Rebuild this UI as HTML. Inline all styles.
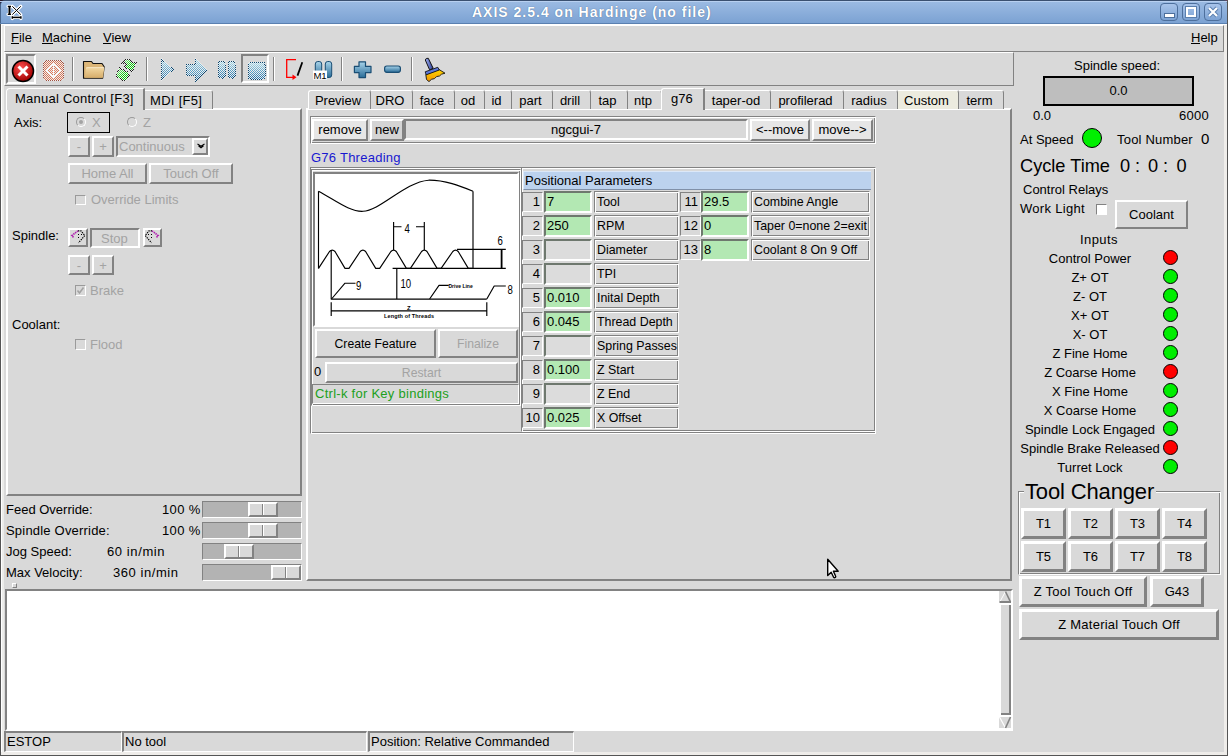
<!DOCTYPE html>
<html><head><meta charset="utf-8">
<style>
*{box-sizing:border-box}
html,body{margin:0;padding:0}
body{width:1228px;height:756px;position:relative;overflow:hidden;background:#d9d9d9;font-family:"Liberation Sans",sans-serif;font-size:13px;color:#000}
.a{position:absolute}
.t{position:absolute;line-height:15px;white-space:nowrap}
.dis{color:#a3a3a3}
.r{position:absolute;background:#d9d9d9;border:2px solid;border-color:#fff #828282 #828282 #fff}
.s{position:absolute;border:2px solid;border-color:#828282 #fff #fff #828282}
.r1{position:absolute;border:1px solid;border-color:#fff #828282 #828282 #fff}
.s1{position:absolute;border:1px solid;border-color:#828282 #fff #fff #828282}
.ctr{display:flex;align-items:center;justify-content:center;white-space:nowrap}
.tab{position:absolute;top:90px;height:19px;border-top:1px solid #fff;border-right:1px solid #828282;border-top-right-radius:3px;display:flex;justify-content:center;padding-right:3px;line-height:15px;padding-top:2px;white-space:nowrap}
u{text-decoration:none;background:linear-gradient(#000,#000) no-repeat 0 13px/100% 1px}
</style></head><body>
<!-- TITLE BAR -->
<div class="a" style="left:0;top:0;width:5px;height:5px;background:#2a1828"></div><div class="a" style="left:1223px;top:0;width:5px;height:5px;background:#6a4a68"></div><div class="a" style="left:0;top:0;width:1228px;height:24px;background:linear-gradient(#9cbbe3,#7aa1d2);border-top:1px solid #3a5070;border-left:1px solid #46648c;border-radius:5px 5px 0 0"></div>
<div class="a" style="left:0;top:1px;width:1228px;height:1px;background:#b8d0f0"></div>
<div class="a" style="left:0;top:23px;width:1228px;height:1px;background:#5a80b0"></div>
<div class="a" style="left:0;top:24px;width:1228px;height:1px;background:#fff"></div>
<div class="t" id="title" style="left:472px;top:4px;font-size:14px;line-height:16px;font-weight:bold;color:#fff;letter-spacing:1px;text-shadow:0 0 1px #3c5a80">AXIS 2.5.4 on Hardinge (no file)</div>

<!-- title icons -->
<svg class="a" style="left:0;top:0" width="30" height="24" viewBox="0 0 30 24">
<g stroke="#fff" stroke-width="3.2" fill="none" stroke-linecap="round">
<path d="M8 6.3h2.8M9.5 6.3v8M8 14.3h2.8M12.3 6.3l8.5 8.3M20.8 6.3l-8.5 8.3M12.3 17.4h8.6M12.3 16.3v2.3M20.9 16.3v2.3"/></g>
<g stroke="#000" fill="none">
<path d="M7.8 6.3h3.2M7.8 14.3h3.2" stroke-width="1.3"/><path d="M9.5 6v8.6" stroke-width="2"/>
<path d="M12.3 6.3l8.5 8.3M20.8 6.3l-8.5 8.3" stroke-width="1"/>
<path d="M12.3 17.4h8.6" stroke-width="1.5"/><path d="M12.3 16.2v2.5M20.9 16.2v2.5" stroke-width="1.4"/>
</g></svg>
<div class="a" style="left:1160px;top:3px;width:18px;height:18px;border:1px solid #4d6f9c;border-radius:4px;background:linear-gradient(#a8c4ea,#7ca2d3)"></div>
<div class="a" style="left:1164px;top:13px;width:11px;height:5px;background:#fff;border:1px solid #4d6f9c"></div>
<div class="a" style="left:1182px;top:3px;width:18px;height:18px;border:1px solid #4d6f9c;border-radius:4px;background:linear-gradient(#a8c4ea,#7ca2d3)"></div>
<div class="a" style="left:1186px;top:7px;width:10px;height:10px;border:2px solid #fff;outline:1px solid #5a7fae"></div>
<div class="a" style="left:1204px;top:3px;width:18px;height:18px;border:1px solid #4d6f9c;border-radius:4px;background:linear-gradient(#a8c4ea,#7ca2d3)"></div>
<svg class="a" style="left:1204px;top:3px" width="18" height="18"><path d="M5 5l8 8M13 5l-8 8" stroke="#5a7fae" stroke-width="4"/><path d="M5 5l8 8M13 5l-8 8" stroke="#fff" stroke-width="2.2"/></svg>
<!-- WINDOW FRAME -->
<div class="a" style="left:0;top:24px;width:1px;height:732px;background:#555"></div>
<div class="a" style="left:1px;top:25px;width:3px;height:730px;background:#ececea;border-left:1px solid #fff"></div>
<div class="a" style="left:1227px;top:0;width:1px;height:756px;background:#555"></div>
<div class="a" style="left:1224px;top:25px;width:3px;height:730px;background:#efedea"></div>
<div class="a" style="left:0;top:755px;width:1228px;height:1px;background:#555"></div>
<div class="a" style="left:1px;top:752px;width:1226px;height:3px;background:#efedea"></div>
<!-- MENUBAR -->
<div class="r1" style="left:4px;top:25px;width:1220px;height:27px;border-color:#fff #828282 #828282 #fff"></div>
<div class="t" style="left:11px;top:30px"><u>F</u>ile</div>
<div class="t" style="left:42px;top:30px"><u>M</u>achine</div>
<div class="t" style="left:103px;top:30px"><u>V</u>iew</div>
<div class="t" style="left:1191px;top:30px"><u>H</u>elp</div>
<!-- TOOLBAR -->
<div class="r1" style="left:4px;top:52px;width:1010px;height:34px;border-color:#fff #828282 #828282 #fff"></div>

<!-- TOOLBAR ICONS -->
<div class="s" style="left:6px;top:54px;width:30px;height:30px"></div>
<div class="s" style="left:241px;top:54px;width:28px;height:29px"></div>
<svg class="a" style="left:0;top:50px" width="460" height="36" viewBox="0 50 460 36">
<defs>
<pattern id="chk" x="0" y="0" width="2" height="2" patternUnits="userSpaceOnUse"><rect x="1" y="0" width="1" height="1" fill="#eeeeee"/><rect x="0" y="1" width="1" height="1" fill="#eeeeee"/></pattern>
<linearGradient id="gL" x1="0" y1="0" x2="0" y2="1"><stop offset="0" stop-color="#a8dcec"/><stop offset="1" stop-color="#1e6ea6"/></linearGradient>
<linearGradient id="gG" x1="0" y1="0" x2="1" y2="1"><stop offset="0" stop-color="#b0f0b0"/><stop offset="0.5" stop-color="#10d010"/><stop offset="1" stop-color="#00b000"/></linearGradient>
<linearGradient id="gR" x1="0" y1="0" x2="0" y2="1"><stop offset="0" stop-color="#d06040"/><stop offset="1" stop-color="#c05030"/></linearGradient>
<radialGradient id="gRed" cx="40%" cy="35%" r="65%"><stop offset="0" stop-color="#ff5050"/><stop offset="1" stop-color="#a00000"/></radialGradient>
<linearGradient id="gBlue" x1="0" y1="0" x2="0" y2="1"><stop offset="0" stop-color="#7ab4dc"/><stop offset="1" stop-color="#2a6a9c"/></linearGradient>
</defs>
<!-- estop sunken btn -->
<circle cx="23" cy="71" r="10.5" fill="url(#gRed)" stroke="#000" stroke-width="1.5"/>
<path d="M18.5 66.5l9 9M27.5 66.5l-9 9" stroke="#fff" stroke-width="3"/>
<!-- separators -->
<g stroke-width="1"><path d="M72.5 57v24M146.5 57v24M273.5 57v24M341.5 57v24M411.5 57v24" stroke="#828282"/><path d="M73.5 57v24M147.5 57v24M274.5 57v24M342.5 57v24M412.5 57v24" stroke="#fff"/></g>
<!-- folder -->
<linearGradient id="gF" x1="0" y1="0" x2="0" y2="1"><stop offset="0" stop-color="#f2d8a2"/><stop offset="1" stop-color="#d6ad6a"/></linearGradient>
<path d="M83.5 61.5h8l1.5 2h9l2.2 3.2-1.5 11.5h-19.2z" fill="#dcb678" stroke="#111" stroke-width="1.1" stroke-linejoin="round"/>
<path d="M87 67.5Q86 67.5 85.8 69L85 77.8H103L104.3 67.5z" fill="url(#gF)"/>
<path d="M86 68.2Q86.5 67.6 88 67.6H104" stroke="#fbeed0" stroke-width="0.8" fill="none"/>
<g shape-rendering="crispEdges">
<!-- reset -->
<rect x="43.5" y="60.5" width="20" height="20" rx="4" fill="#d87858" stroke="#a05040"/>
<path d="M53.5 63.5l7 7-7 7-7-7z" fill="none" stroke="#fff" stroke-width="1.6"/>
<path d="M53.5 66.5l4 4-4 4-4-4z" fill="#e08060"/>
<path d="M53.5 65v11" stroke="#fff" stroke-width="1"/>
<rect x="43.5" y="60.5" width="20" height="20" rx="4" fill="url(#chk)" stroke="url(#chk)"/>
<!-- reload -->
<path id="rl1" d="M121 64.5L126 59h3l3 3.5h4l-3.5 9-8.5-4.5 3-2-2-2.5z" fill="url(#gG)" stroke="#202020"/>
<path id="rl2" d="M116 78V75l3.5-7 8 4 2 4-4 4.5h-2.5l-5-3z" fill="url(#gG)" stroke="#202020"/>
<path d="M121 64.5L126 59h3l3 3.5h4l-3.5 9-8.5-4.5 3-2-2-2.5z" fill="url(#chk)" stroke="url(#chk)"/>
<path d="M116 78V75l3.5-7 8 4 2 4-4 4.5h-2.5l-5-3z" fill="url(#chk)" stroke="url(#chk)"/>
<!-- play -->
<path d="M161.5 59v21l11.5-10.5z" fill="url(#gL)" stroke="#0a4670"/>
<path d="M161.5 59v21l11.5-10.5z" fill="url(#chk)" stroke="url(#chk)"/>
<!-- step -->
<path d="M186.5 64.5h9v-6l11.5 11.5-11.5 11.5v-6.5h-9z" fill="url(#gL)" stroke="#0a4670"/>
<path d="M186.5 64.5h9v-6l11.5 11.5-11.5 11.5v-6.5h-9z" fill="url(#chk)" stroke="url(#chk)"/>
<!-- pause -->
<rect x="218.5" y="61.5" width="6.5" height="16.5" rx="2" fill="url(#gL)" stroke="#0a4670"/>
<rect x="228.5" y="61.5" width="6.5" height="16.5" rx="2" fill="url(#gL)" stroke="#0a4670"/>
<rect x="218.5" y="61.5" width="6.5" height="16.5" rx="2" fill="url(#chk)" stroke="url(#chk)"/>
<rect x="228.5" y="61.5" width="6.5" height="16.5" rx="2" fill="url(#chk)" stroke="url(#chk)"/>
<!-- stop square -->
<rect x="248.5" y="62.5" width="16.5" height="16.5" rx="2" fill="url(#gL)" stroke="#0a4670"/>
<rect x="248.5" y="62.5" width="16.5" height="16.5" rx="2" fill="url(#chk)" stroke="url(#chk)"/>
</g>
<!-- stop sunken btn -->
<!-- block delete -->
<path d="M296 59.7h-9.3v17.6h6.5" stroke="#f00" stroke-width="1.3" fill="none"/>
<path d="M292.5 74.6l4 2.7-4 2.7z" fill="#f00"/>
<path d="M302.3 62.3l-4.8 13.3" stroke="#000" stroke-width="1.8"/>
<!-- M1 -->
<linearGradient id="gB2" x1="0" y1="0" x2="0" y2="1"><stop offset="0" stop-color="#a8d4ea"/><stop offset="1" stop-color="#2a6c98"/></linearGradient>
<rect x="315.3" y="61.5" width="6.4" height="16" rx="2.5" fill="url(#gB2)" stroke="#1a4e74"/>
<rect x="325.3" y="61.5" width="6.4" height="16" rx="2.5" fill="url(#gB2)" stroke="#1a4e74"/>
<rect x="313" y="70.5" width="14" height="9" fill="#fff"/>
<text x="313.5" y="78.6" font-family="Liberation Sans" font-size="9.6" fill="#000" textLength="13">M1</text>
<!-- plus minus -->
<path d="M359 61.8h6.5v4.6h5.5v6.2h-5.5v5h-6.5v-5h-4.6v-6.2h4.6z" fill="url(#gB2)" stroke="#1a4e74" stroke-width="1.2" stroke-linejoin="round"/>
<rect x="384.6" y="66" width="15.8" height="6.3" rx="2.2" fill="url(#gB2)" stroke="#1a4e74" stroke-width="1.2"/>
<!-- broom -->
<linearGradient id="gH" x1="0" y1="0" x2="1" y2="0"><stop offset="0" stop-color="#a0b0f0"/><stop offset="1" stop-color="#2a3c98"/></linearGradient>
<linearGradient id="gY" x1="0" y1="0" x2="0" y2="1"><stop offset="0" stop-color="#ffd800"/><stop offset="1" stop-color="#f09000"/></linearGradient>
<path d="M425.3 60Q425.8 57.8 428.3 58.3L433.2 68.3L429.6 69.8Z" fill="url(#gH)" stroke="#111" stroke-width="1"/>
<path d="M426.5 79.5L425.8 74.5L439 69.5L445 73.2L441.5 74.2L439.5 76L436.5 76.6L434.5 78.6L431.5 79.3L429 81.6Z" fill="url(#gY)" stroke="#111" stroke-width="0.9" stroke-linejoin="round"/>
<path d="M425.2 71.8L437.8 67.3L439.3 70L426.2 74.8Z" fill="#5c78d8" stroke="#111" stroke-width="0.9"/>
</svg>

<!-- LEFT NOTEBOOK -->
<div class="a" style="left:6px;top:108px;width:296px;height:388px;border:1px solid;border-color:#fff #828282 #828282 #fff;border-width:2px 2px 2px 2px"></div>
<!-- tabs -->
<div class="a" style="left:6px;top:88px;width:139px;height:22px;background:#d9d9d9;border-top:1px solid #fff;border-left:1px solid #fff;border-right:2px solid #828282;border-top-left-radius:4px"></div>
<div class="t" style="left:15px;top:91px;letter-spacing:0.24px">Manual Control [F3]</div>
<div class="a" style="left:145px;top:90px;width:68px;height:19px;background:#d9d9d9;border-top:1px solid #fff;border-right:1px solid #828282;border-top-right-radius:3px"></div>
<div class="t" style="left:150px;top:93px;letter-spacing:0.3px">MDI [F5]</div>
<!-- left panel content -->
<div class="t" style="left:14px;top:115px">Axis:</div>
<div class="a" style="left:67px;top:112px;width:43px;height:21px;border:1px solid #000"></div>
<div class="a" style="left:76px;top:117px;width:10px;height:10px;border-radius:50%;border:1px solid;border-color:#9a9a9a #fff #fff #9a9a9a;background:#d9d9d9"></div>
<div class="a" style="left:79px;top:120px;width:4px;height:4px;border-radius:50%;background:#a3a3a3"></div>
<div class="t dis" style="left:92px;top:115px">X</div>
<div class="a" style="left:127px;top:117px;width:10px;height:10px;border-radius:50%;border:1px solid;border-color:#9a9a9a #fff #fff #9a9a9a;background:#d9d9d9"></div>
<div class="t dis" style="left:143px;top:115px">Z</div>
<div class="r ctr dis" style="left:68px;top:136px;width:22px;height:21px">-</div>
<div class="r ctr dis" style="left:92px;top:136px;width:22px;height:21px">+</div>
<div class="s" style="left:116px;top:136px;width:94px;height:21px"></div>
<div class="t dis" style="left:119px;top:139px">Continuous</div>
<div class="r" style="left:192px;top:138px;width:16px;height:17px"></div>
<svg class="a" style="left:197px;top:143px" width="8" height="6"><path d="M0.5 1l3.5 2.2 3.5-2.2M1.5 2.8l2.5 2 2.5-2" stroke="#000" fill="none" stroke-width="1.1"/></svg>
<div class="r ctr dis" style="left:68px;top:163px;width:79px;height:21px">Home All</div>
<div class="r ctr dis" style="left:149px;top:163px;width:84px;height:21px">Touch Off</div>
<div class="a" style="left:75px;top:195px;width:11px;height:10px;border:1px solid;border-color:#9a9a9a #fff #fff #9a9a9a"></div>
<div class="t dis" style="left:91px;top:192px">Override Limits</div>
<div class="t" style="left:12px;top:228px">Spindle:</div>
<div class="r" style="left:68px;top:228px;width:20px;height:19px"></div>
<svg class="a" style="left:68px;top:227px" width="20" height="20" viewBox="68 227 20 20"><g fill="none" stroke-width="1.2"><path d="M78 230.8H81L84.8 235.5L78.5 242.8" stroke="#000" stroke-dasharray="1.3 1"/><path d="M78 230.8L71.8 235.6L74 237.8" stroke="#b020b0" stroke-width="1.6" stroke-dasharray="1.5 0.7"/></g><path d="M78 234.5h1M78 237.5h1M81 234.5h1" stroke="#000"/></svg>
<div class="s" style="left:90px;top:228px;width:50px;height:20px;border-color:#828282 #fff #fff #828282"></div>
<div class="t dis" style="left:101px;top:231px">Stop</div>
<div class="r" style="left:143px;top:228px;width:19px;height:19px"></div>
<svg class="a" style="left:142px;top:227px" width="20" height="20" viewBox="142 227 20 20"><g fill="none" stroke-width="1.2"><path d="M152 230.8H149L145.2 235.5L151.5 242.8" stroke="#000" stroke-dasharray="1.3 1"/><path d="M152 230.8L158.2 235.6L156 237.8" stroke="#b020b0" stroke-width="1.6" stroke-dasharray="1.5 0.7"/></g><path d="M151 234.5h1M151 237.5h1M148 234.5h1" stroke="#000"/></svg>
<div class="r ctr dis" style="left:68px;top:255px;width:22px;height:20px">-</div>
<div class="r ctr dis" style="left:92px;top:255px;width:22px;height:20px">+</div>
<div class="a" style="left:75px;top:285px;width:11px;height:11px;border:1px solid;border-color:#9a9a9a #fff #fff #9a9a9a"></div>
<svg class="a" style="left:76px;top:286px" width="9" height="9"><path d="M1.5 4.5l2 2.5 4-5.5" stroke="#a3a3a3" stroke-width="1.6" fill="none"/></svg>
<div class="t dis" style="left:90px;top:283px">Brake</div>
<div class="t" style="left:12px;top:317px">Coolant:</div>
<div class="a" style="left:75px;top:339px;width:11px;height:11px;border:1px solid;border-color:#9a9a9a #fff #fff #9a9a9a"></div>
<div class="t dis" style="left:90px;top:337px">Flood</div>
<!-- sliders -->
<div class="t" style="left:6px;top:502px">Feed Override:</div>
<div class="t" style="left:162px;top:502px;letter-spacing:0.35px">100 %</div>
<div class="t" style="left:6px;top:523px;letter-spacing:0.2px">Spindle Override:</div>
<div class="t" style="left:162px;top:523px;letter-spacing:0.35px">100 %</div>
<div class="t" style="left:6px;top:544px">Jog Speed:</div>
<div class="t" style="left:107px;top:544px;letter-spacing:0.6px">60 in/min</div>
<div class="t" style="left:6px;top:565px">Max Velocity:</div>
<div class="t" style="left:113px;top:565px;letter-spacing:0.55px">360 in/min</div>
<div class="s1" style="left:202px;top:501px;width:100px;height:17px;background:#b3b3b3"></div>
<div class="r" style="left:248px;top:502px;width:30px;height:15px"></div><div class="a" style="left:262px;top:504px;width:1px;height:11px;background:#828282"></div><div class="a" style="left:263px;top:504px;width:1px;height:11px;background:#fff"></div>
<div class="s1" style="left:202px;top:522px;width:100px;height:17px;background:#b3b3b3"></div>
<div class="r" style="left:248px;top:523px;width:30px;height:15px"></div><div class="a" style="left:262px;top:525px;width:1px;height:11px;background:#828282"></div><div class="a" style="left:263px;top:525px;width:1px;height:11px;background:#fff"></div>
<div class="s1" style="left:202px;top:543px;width:100px;height:17px;background:#b3b3b3"></div>
<div class="r" style="left:224px;top:544px;width:30px;height:15px"></div><div class="a" style="left:238px;top:546px;width:1px;height:11px;background:#828282"></div><div class="a" style="left:239px;top:546px;width:1px;height:11px;background:#fff"></div>
<div class="s1" style="left:202px;top:564px;width:100px;height:17px;background:#b3b3b3"></div>
<div class="r" style="left:271px;top:565px;width:30px;height:15px"></div><div class="a" style="left:285px;top:567px;width:1px;height:11px;background:#828282"></div><div class="a" style="left:286px;top:567px;width:1px;height:11px;background:#fff"></div>

<!-- RIGHT NOTEBOOK -->
<div class="a" style="left:306px;top:108px;width:706px;height:473px;border:2px solid;border-color:#fff #828282 #828282 #fff"></div>
<div class="tab" style="left:308px;width:63px;background:#d9d9d9;border-left:1px solid #fff;border-top-left-radius:3px;">Preview</div>
<div class="tab" style="left:371px;width:42px;background:#d9d9d9;">DRO</div>
<div class="tab" style="left:413px;width:42px;background:#d9d9d9;">face</div>
<div class="tab" style="left:455px;width:30px;background:#d9d9d9;">od</div>
<div class="tab" style="left:485px;width:27px;background:#d9d9d9;">id</div>
<div class="tab" style="left:512px;width:41px;background:#d9d9d9;">part</div>
<div class="tab" style="left:553px;width:38px;background:#d9d9d9;">drill</div>
<div class="tab" style="left:591px;width:37px;background:#d9d9d9;">tap</div>
<div class="tab" style="left:628px;width:34px;background:#d9d9d9;">ntp</div>
<div class="tab" style="left:705px;width:66px;background:#d9d9d9;">taper-od</div>
<div class="tab" style="left:771px;width:73px;background:#d9d9d9;">profilerad</div>
<div class="tab" style="left:844px;width:54px;background:#d9d9d9;">radius</div>
<div class="tab" style="left:898px;width:61px;background:#ecebdf;">Custom</div>
<div class="tab" style="left:959px;width:45px;background:#d9d9d9;">term</div>
<div class="a" style="left:661px;top:88px;width:44px;height:22px;background:#d9d9d9;border-top:1px solid #fff;border-left:1px solid #fff;border-right:2px solid #828282;border-top-left-radius:3px"></div>
<div class="t" style="left:671px;top:91px">g76</div>

<!-- ngcgui toolbar -->
<div class="a" style="left:310px;top:116px;width:566px;height:28px;border:1px solid;border-color:#828282 #fff #fff #828282;box-shadow:inset 1px 1px 0 #fff, inset -1px -1px 0 #828282"></div>
<div class="r ctr" style="left:312px;top:119px;width:56px;height:22px;background:#e6e6e6;padding-bottom:2px">remove</div>
<div class="r ctr" style="left:370px;top:119px;width:34px;height:22px;background:#d4d4d4;padding-bottom:2px">new</div>
<div class="s ctr" style="left:404px;top:119px;width:344px;height:21px;padding-bottom:1px">ngcgui-7</div>
<div class="r ctr" style="left:750px;top:119px;width:60px;height:22px;background:#e6e6e6;padding-bottom:2px">&lt;--move</div>
<div class="r ctr" style="left:812px;top:119px;width:61px;height:22px;background:#e6e6e6;padding-bottom:2px">move--&gt;</div>
<div class="t" style="left:311px;top:150px;color:#1818d0;letter-spacing:0.25px">G76 Threading</div>
<!-- big frame -->
<div class="a" style="left:310px;top:167px;width:566px;height:267px;border:1px solid;border-color:#828282 #fff #fff #828282;box-shadow:inset 1px 1px 0 #fff, inset -1px -1px 0 #828282"></div>
<div class="a" style="left:311px;top:169px;width:210px;height:237px;border:1px solid;border-color:#828282 #fff #fff #828282;box-shadow:inset 1px 1px 0 #fff, inset -1px -1px 0 #828282"></div>
<div class="a" style="left:313px;top:172px;width:206px;height:155px;border:2px solid;border-color:#828282 #fff #fff #828282;box-shadow:inset 1px 1px 0 #d9d9d9"></div>
<div class="a" style="left:315px;top:174px;width:202px;height:151px;background:#fff"></div>
<div class="r ctr" style="left:315px;top:329px;width:121px;height:29px;font-size:12.2px">Create Feature</div>
<div class="r ctr dis" style="left:438px;top:329px;width:80px;height:29px;font-size:12.2px">Finalize</div>
<div class="t" style="left:314px;top:364px">0</div>
<div class="r ctr dis" style="left:325px;top:362px;width:193px;height:21px;font-size:12.2px">Restart</div>
<div class="s1" style="left:312px;top:384px;width:207px;height:20px"></div>
<div class="t" style="left:315px;top:386px;color:#20a020;letter-spacing:0.27px">Ctrl-k for Key bindings</div>
<div class="a" style="left:521px;top:167px;width:355px;height:265px;border:1px solid;border-color:#828282 #fff #fff #828282;box-shadow:inset 1px 1px 0 #fff, inset -1px -1px 0 #828282"></div>
<div class="a" style="left:523px;top:171px;width:348px;height:19px;background:#bcd2ee;border-top:1px solid #dce8f8;border-left:1px solid #dce8f8;border-bottom:1px solid #8090a8"></div>
<div class="t" style="left:525px;top:173px">Positional Parameters</div>
<!-- PARAM ROWS -->
<div class="s1" style="left:522px;top:192px;width:21px;height:20px"></div>
<div class="t" style="left:522px;top:194px;width:18px;text-align:right">1</div>
<div class="s" style="left:544px;top:191px;width:48px;height:22px;background:#b3e8b3;border-color:#6e786e #fff #fff #6e786e"></div>
<div class="t" style="left:547px;top:194px">7</div>
<div class="a" style="left:594px;top:191px;width:85px;height:22px;border:1px solid;border-color:#828282 #fff #fff #828282;box-shadow:inset 1px 1px 0 #fff, inset -1px -1px 0 #828282"></div>
<div class="t" style="left:597px;top:195px;font-size:12.4px">Tool</div>
<div class="s1" style="left:522px;top:216px;width:21px;height:20px"></div>
<div class="t" style="left:522px;top:218px;width:18px;text-align:right">2</div>
<div class="s" style="left:544px;top:215px;width:48px;height:22px;background:#b3e8b3;border-color:#6e786e #fff #fff #6e786e"></div>
<div class="t" style="left:547px;top:218px">250</div>
<div class="a" style="left:594px;top:215px;width:85px;height:22px;border:1px solid;border-color:#828282 #fff #fff #828282;box-shadow:inset 1px 1px 0 #fff, inset -1px -1px 0 #828282"></div>
<div class="t" style="left:597px;top:219px;font-size:12.4px">RPM</div>
<div class="s1" style="left:522px;top:240px;width:21px;height:20px"></div>
<div class="t" style="left:522px;top:242px;width:18px;text-align:right">3</div>
<div class="s" style="left:544px;top:239px;width:48px;height:22px;background:#dcdcdc;border-color:#6e786e #fff #fff #6e786e"></div>
<div class="a" style="left:594px;top:239px;width:85px;height:22px;border:1px solid;border-color:#828282 #fff #fff #828282;box-shadow:inset 1px 1px 0 #fff, inset -1px -1px 0 #828282"></div>
<div class="t" style="left:597px;top:243px;font-size:12.4px">Diameter</div>
<div class="s1" style="left:522px;top:264px;width:21px;height:20px"></div>
<div class="t" style="left:522px;top:266px;width:18px;text-align:right">4</div>
<div class="s" style="left:544px;top:263px;width:48px;height:22px;background:#dcdcdc;border-color:#6e786e #fff #fff #6e786e"></div>
<div class="a" style="left:594px;top:263px;width:85px;height:22px;border:1px solid;border-color:#828282 #fff #fff #828282;box-shadow:inset 1px 1px 0 #fff, inset -1px -1px 0 #828282"></div>
<div class="t" style="left:597px;top:267px;font-size:12.4px">TPI</div>
<div class="s1" style="left:522px;top:288px;width:21px;height:20px"></div>
<div class="t" style="left:522px;top:290px;width:18px;text-align:right">5</div>
<div class="s" style="left:544px;top:287px;width:48px;height:22px;background:#b3e8b3;border-color:#6e786e #fff #fff #6e786e"></div>
<div class="t" style="left:547px;top:290px">0.010</div>
<div class="a" style="left:594px;top:287px;width:85px;height:22px;border:1px solid;border-color:#828282 #fff #fff #828282;box-shadow:inset 1px 1px 0 #fff, inset -1px -1px 0 #828282"></div>
<div class="t" style="left:597px;top:291px;font-size:12.4px">Inital Depth</div>
<div class="s1" style="left:522px;top:312px;width:21px;height:20px"></div>
<div class="t" style="left:522px;top:314px;width:18px;text-align:right">6</div>
<div class="s" style="left:544px;top:311px;width:48px;height:22px;background:#b3e8b3;border-color:#6e786e #fff #fff #6e786e"></div>
<div class="t" style="left:547px;top:314px">0.045</div>
<div class="a" style="left:594px;top:311px;width:85px;height:22px;border:1px solid;border-color:#828282 #fff #fff #828282;box-shadow:inset 1px 1px 0 #fff, inset -1px -1px 0 #828282"></div>
<div class="t" style="left:597px;top:315px;font-size:12.4px">Thread Depth</div>
<div class="s1" style="left:522px;top:336px;width:21px;height:20px"></div>
<div class="t" style="left:522px;top:338px;width:18px;text-align:right">7</div>
<div class="s" style="left:544px;top:335px;width:48px;height:22px;background:#dcdcdc;border-color:#6e786e #fff #fff #6e786e"></div>
<div class="a" style="left:594px;top:335px;width:85px;height:22px;border:1px solid;border-color:#828282 #fff #fff #828282;box-shadow:inset 1px 1px 0 #fff, inset -1px -1px 0 #828282"></div>
<div class="t" style="left:597px;top:339px;font-size:12.4px">Spring Passes</div>
<div class="s1" style="left:522px;top:360px;width:21px;height:20px"></div>
<div class="t" style="left:522px;top:362px;width:18px;text-align:right">8</div>
<div class="s" style="left:544px;top:359px;width:48px;height:22px;background:#b3e8b3;border-color:#6e786e #fff #fff #6e786e"></div>
<div class="t" style="left:547px;top:362px">0.100</div>
<div class="a" style="left:594px;top:359px;width:85px;height:22px;border:1px solid;border-color:#828282 #fff #fff #828282;box-shadow:inset 1px 1px 0 #fff, inset -1px -1px 0 #828282"></div>
<div class="t" style="left:597px;top:363px;font-size:12.4px">Z Start</div>
<div class="s1" style="left:522px;top:384px;width:21px;height:20px"></div>
<div class="t" style="left:522px;top:386px;width:18px;text-align:right">9</div>
<div class="s" style="left:544px;top:383px;width:48px;height:22px;background:#dcdcdc;border-color:#6e786e #fff #fff #6e786e"></div>
<div class="a" style="left:594px;top:383px;width:85px;height:22px;border:1px solid;border-color:#828282 #fff #fff #828282;box-shadow:inset 1px 1px 0 #fff, inset -1px -1px 0 #828282"></div>
<div class="t" style="left:597px;top:387px;font-size:12.4px">Z End</div>
<div class="s1" style="left:522px;top:408px;width:21px;height:20px"></div>
<div class="t" style="left:522px;top:410px;width:18px;text-align:right">10</div>
<div class="s" style="left:544px;top:407px;width:48px;height:22px;background:#b3e8b3;border-color:#6e786e #fff #fff #6e786e"></div>
<div class="t" style="left:547px;top:410px">0.025</div>
<div class="a" style="left:594px;top:407px;width:85px;height:22px;border:1px solid;border-color:#828282 #fff #fff #828282;box-shadow:inset 1px 1px 0 #fff, inset -1px -1px 0 #828282"></div>
<div class="t" style="left:597px;top:411px;font-size:12.4px">X Offset</div>
<div class="s1" style="left:680px;top:192px;width:21px;height:20px"></div>
<div class="t" style="left:680px;top:194px;width:18px;text-align:right">11</div>
<div class="s" style="left:701px;top:191px;width:48px;height:22px;background:#b3e8b3;border-color:#6e786e #fff #fff #6e786e"></div>
<div class="t" style="left:704px;top:194px">29.5</div>
<div class="a" style="left:751px;top:191px;width:119px;height:22px;border:1px solid;border-color:#828282 #fff #fff #828282;box-shadow:inset 1px 1px 0 #fff, inset -1px -1px 0 #828282"></div>
<div class="t" style="left:754px;top:195px;font-size:12.4px">Combine Angle</div>
<div class="s1" style="left:680px;top:216px;width:21px;height:20px"></div>
<div class="t" style="left:680px;top:218px;width:18px;text-align:right">12</div>
<div class="s" style="left:701px;top:215px;width:48px;height:22px;background:#b3e8b3;border-color:#6e786e #fff #fff #6e786e"></div>
<div class="t" style="left:704px;top:218px">0</div>
<div class="a" style="left:751px;top:215px;width:119px;height:22px;border:1px solid;border-color:#828282 #fff #fff #828282;box-shadow:inset 1px 1px 0 #fff, inset -1px -1px 0 #828282"></div>
<div class="t" style="left:754px;top:219px;font-size:12.4px">Taper 0=none 2=exit</div>
<div class="s1" style="left:680px;top:240px;width:21px;height:20px"></div>
<div class="t" style="left:680px;top:242px;width:18px;text-align:right">13</div>
<div class="s" style="left:701px;top:239px;width:48px;height:22px;background:#b3e8b3;border-color:#6e786e #fff #fff #6e786e"></div>
<div class="t" style="left:704px;top:242px">8</div>
<div class="a" style="left:751px;top:239px;width:119px;height:22px;border:1px solid;border-color:#828282 #fff #fff #828282;box-shadow:inset 1px 1px 0 #fff, inset -1px -1px 0 #828282"></div>
<div class="t" style="left:754px;top:243px;font-size:12.4px">Coolant 8 On 9 Off</div>
<!-- RIGHT PANEL -->
<div class="a" style="left:1012px;top:53px;width:1px;height:0px"></div>
<div class="t" style="left:1074px;top:58px">Spindle speed:</div>
<div class="a" style="left:1043px;top:76px;width:151px;height:30px;border:2px solid #000;background:#bebebe"></div>
<div class="t" style="left:1043px;top:83px;width:151px;text-align:center">0.0</div>
<div class="t" style="left:1033px;top:108px">0.0</div>
<div class="t" style="left:1179px;top:108px;letter-spacing:0.3px">6000</div>
<div class="t" style="left:1020px;top:132px">At Speed</div>
<div class="a" style="left:1082px;top:128px;width:20px;height:20px;border-radius:50%;background:#00f000;border:1px solid #000"></div>
<div class="t" style="left:1117px;top:132px;letter-spacing:0.2px">Tool Number</div>
<div class="t" style="left:1201px;top:131px;font-size:15px;line-height:15px">0</div>
<div class="t" style="left:1020px;top:156px;font-size:18.2px;line-height:20px">Cycle Time</div>
<div class="t" style="left:1120px;top:156px;font-size:18.2px;line-height:20px">0</div><div class="t" style="left:1135px;top:156px;font-size:18.2px;line-height:20px">:</div><div class="t" style="left:1148px;top:156px;font-size:18.2px;line-height:20px">0</div><div class="t" style="left:1163px;top:156px;font-size:18.2px;line-height:20px">:</div><div class="t" style="left:1176.5px;top:156px;font-size:18.2px;line-height:20px">0</div>
<div class="t" style="left:1023px;top:182px">Control Relays</div>
<div class="t" style="left:1020px;top:201px;letter-spacing:0.3px">Work Light</div>
<div class="a" style="left:1096px;top:204px;width:11px;height:11px;background:#fff;border:1px solid;border-color:#828282 #fff #fff #828282"></div>
<div class="r ctr" style="left:1115px;top:200px;width:73px;height:29px">Coolant</div>
<div class="t" style="left:1080px;top:232px;letter-spacing:0.4px">Inputs</div>
<div class="t" style="left:1000px;top:250.9px;width:180px;text-align:center">Control Power</div>
<div class="a" style="left:1162.5px;top:249.9px;width:15px;height:15px;border-radius:50%;background:#ff0000;border:1px solid #000"></div>
<div class="t" style="left:1000px;top:269.9px;width:180px;text-align:center">Z+ OT</div>
<div class="a" style="left:1162.5px;top:268.9px;width:15px;height:15px;border-radius:50%;background:#00ee00;border:1px solid #000"></div>
<div class="t" style="left:1000px;top:288.9px;width:180px;text-align:center">Z- OT</div>
<div class="a" style="left:1162.5px;top:287.9px;width:15px;height:15px;border-radius:50%;background:#00ee00;border:1px solid #000"></div>
<div class="t" style="left:1000px;top:307.9px;width:180px;text-align:center">X+ OT</div>
<div class="a" style="left:1162.5px;top:306.9px;width:15px;height:15px;border-radius:50%;background:#00ee00;border:1px solid #000"></div>
<div class="t" style="left:1000px;top:326.9px;width:180px;text-align:center">X- OT</div>
<div class="a" style="left:1162.5px;top:325.9px;width:15px;height:15px;border-radius:50%;background:#00ee00;border:1px solid #000"></div>
<div class="t" style="left:1000px;top:345.9px;width:180px;text-align:center">Z Fine Home</div>
<div class="a" style="left:1162.5px;top:344.9px;width:15px;height:15px;border-radius:50%;background:#00ee00;border:1px solid #000"></div>
<div class="t" style="left:1000px;top:364.9px;width:180px;text-align:center">Z Coarse Home</div>
<div class="a" style="left:1162.5px;top:363.9px;width:15px;height:15px;border-radius:50%;background:#ff0000;border:1px solid #000"></div>
<div class="t" style="left:1000px;top:383.9px;width:180px;text-align:center">X Fine Home</div>
<div class="a" style="left:1162.5px;top:382.9px;width:15px;height:15px;border-radius:50%;background:#00ee00;border:1px solid #000"></div>
<div class="t" style="left:1000px;top:402.9px;width:180px;text-align:center">X Coarse Home</div>
<div class="a" style="left:1162.5px;top:401.9px;width:15px;height:15px;border-radius:50%;background:#00ee00;border:1px solid #000"></div>
<div class="t" style="left:1000px;top:421.9px;width:180px;text-align:center">Spindle Lock Engaged</div>
<div class="a" style="left:1162.5px;top:420.9px;width:15px;height:15px;border-radius:50%;background:#00ee00;border:1px solid #000"></div>
<div class="t" style="left:1000px;top:440.9px;width:180px;text-align:center">Spindle Brake Released</div>
<div class="a" style="left:1162.5px;top:439.9px;width:15px;height:15px;border-radius:50%;background:#ff0000;border:1px solid #000"></div>
<div class="t" style="left:1000px;top:459.9px;width:180px;text-align:center">Turret Lock</div>
<div class="a" style="left:1162.5px;top:458.9px;width:15px;height:15px;border-radius:50%;background:#00ee00;border:1px solid #000"></div>

<div class="a" style="left:1018px;top:491px;width:203px;height:84px;border:1px solid;border-color:#828282 #fff #fff #828282;box-shadow:inset 1px 1px 0 #fff, inset -1px -1px 0 #828282"></div>
<div class="a" style="left:1024px;top:484px;width:132px;height:14px;background:#d9d9d9"></div>
<div class="t" style="left:1025px;top:480px;font-size:22px;line-height:24px;letter-spacing:-0.15px">Tool Changer</div>
<div class="r ctr" style="left:1021px;top:508px;width:45px;height:31px;border-width:3px">T1</div>
<div class="r ctr" style="left:1068px;top:508px;width:45px;height:31px;border-width:3px">T2</div>
<div class="r ctr" style="left:1115px;top:508px;width:45px;height:31px;border-width:3px">T3</div>
<div class="r ctr" style="left:1162px;top:508px;width:45px;height:31px;border-width:3px">T4</div>
<div class="r ctr" style="left:1021px;top:541px;width:45px;height:31px;border-width:3px">T5</div>
<div class="r ctr" style="left:1068px;top:541px;width:45px;height:31px;border-width:3px">T6</div>
<div class="r ctr" style="left:1115px;top:541px;width:45px;height:31px;border-width:3px">T7</div>
<div class="r ctr" style="left:1162px;top:541px;width:45px;height:31px;border-width:3px">T8</div>

<div class="r ctr" style="left:1019px;top:576px;width:128px;height:31px;border-width:3px;letter-spacing:0.3px">Z Tool Touch Off</div>
<div class="r ctr" style="left:1150px;top:576px;width:54px;height:31px;border-width:3px">G43</div>
<div class="r ctr" style="left:1019px;top:609px;width:200px;height:31px;border-width:3px;letter-spacing:0.25px">Z Material Touch Off</div>
<!-- BOTTOM -->
<div class="r" style="left:12px;top:583px;width:5px;height:5px;border-width:1px"></div>
<div class="s" style="left:5px;top:589px;width:1008px;height:142px;background:#fff"></div>
<svg class="a" style="left:990px;top:585px" width="30" height="150" viewBox="990 585 30 150">
<rect x="999" y="591" width="12" height="12" fill="#d9d9d9"/>
<path d="M999.5 602.5L1005.5 591.5" stroke="#fff" stroke-width="1"/>
<path d="M1005.5 591.5L1010.5 602" stroke="#828282" stroke-width="1.6"/>
<path d="M999.5 602L1011 602" stroke="#828282" stroke-width="2"/>
<rect x="1001" y="605" width="10" height="110" fill="#d9d9d9"/>
<path d="M1010 605V715M1001 714H1011" stroke="#828282" stroke-width="2"/>
<rect x="999" y="717" width="12" height="11" fill="#d9d9d9"/>
<path d="M999.5 717L1005.5 728" stroke="#fff" stroke-width="1.2"/>
<path d="M1010.5 717L1005.5 728" stroke="#828282" stroke-width="1.6"/>
</svg>
<div class="s" style="left:4px;top:731px;width:118px;height:21px;border-width:2px 1px 1px 2px"></div>
<div class="t" style="left:7px;top:734px">ESTOP</div>
<div class="s" style="left:122px;top:731px;width:245px;height:21px;border-width:2px 1px 1px 2px"></div>
<div class="t" style="left:125px;top:734px">No tool</div>
<div class="s" style="left:368px;top:731px;width:206px;height:21px;border-width:2px 1px 1px 2px"></div>
<div class="t" style="left:371px;top:734px">Position: Relative Commanded</div>

<!-- THREAD DIAGRAM -->
<svg class="a" style="left:310px;top:170px" width="210" height="160" viewBox="310 170 210 160">
<g stroke="#000" stroke-width="1.15" fill="none" stroke-linejoin="round">
<path d="M318.5 191.2 C335 200 350 212 363 211.3 C380 211 405 182 428.5 180.2 C445 180 460 186 473 191.2"/>
<path d="M318.5 191.2 V268.4 M473 191.2 V268.4"/>
<path d="M318.5 268.4 L329.5 251.5 Q332.2 248.6 335 251.5 L345.0 268.4 L349.0 268.4 L360.2 251.5 Q362.9 248.6 365.6 251.5 L375.7 268.4 L379.7 268.4 L390.9 251.5 Q393.6 248.6 396.3 251.5 L406.4 268.4 L410.4 268.4 L421.6 251.5 Q424.3 248.6 427.0 251.5 L437.1 268.4 L441.1 268.4 L452.8 251.5 Q455.5 248.6 458.2 251.5 L468.3 268.4 L472.3 268.4"/>
<path d="M392.6 268.4 H505.8 M457 249.4 H505.8"/>
<path d="M501.6 249.4 V268.4" stroke-width="1.8"/>
<path d="M393.6 250 V221.9 M424.3 250 V221.9 M393.6 226.7 H401.5 M416 226.7 H424.3"/>
<path d="M331.2 250 V299.1 H486.8 M396.8 268.4 V299.1"/>
<path d="M331.5 299 L345 283.2 H355.5 M429.6 299 L439 285.4 H448.7 M486.8 299 L494.2 286 H505.8"/>
<path d="M331.2 310.8 H486.8 M331.2 302.3 V316 M486.8 302.3 V316"/>
</g>
<g font-family="Liberation Sans" fill="#000">
<text x="404.5" y="233" font-size="12" transform="translate(404.5,233) scale(0.8,1) translate(-404.5,-233)">4</text>
<text x="497.5" y="245" font-size="12" transform="translate(497.5,245) scale(0.8,1) translate(-497.5,-245)">6</text>
<text x="400.5" y="287.8" font-size="12" transform="translate(400.5,287.8) scale(0.8,1) translate(-400.5,-287.8)">10</text>
<text x="356" y="289.8" font-size="12" transform="translate(356,289.8) scale(0.8,1) translate(-356,-289.8)">9</text>
<text x="507.5" y="294" font-size="12" transform="translate(507.5,294) scale(0.8,1) translate(-507.5,-294)">8</text>
<text x="448.5" y="288" font-size="5" font-weight="bold">Drive Line</text>
<text x="407" y="310" font-size="6" font-weight="bold">Z</text>
<text x="384" y="317.5" font-size="5.5" font-weight="bold" textLength="50">Length of Threads</text>
</g>
</svg>
<!-- CURSOR -->
<svg class="a" style="left:820px;top:550px" width="30" height="32" viewBox="820 550 30 32"><path d="M827.7 559.2V575.6L831.2 572.2L833.6 577.2Q834.3 578 835.3 577.4Q836 576.8 835.6 576L833.4 571.2H838.2Z" fill="#fff" stroke="#000" stroke-width="1.4" stroke-linejoin="round"/></svg>
</body></html>
